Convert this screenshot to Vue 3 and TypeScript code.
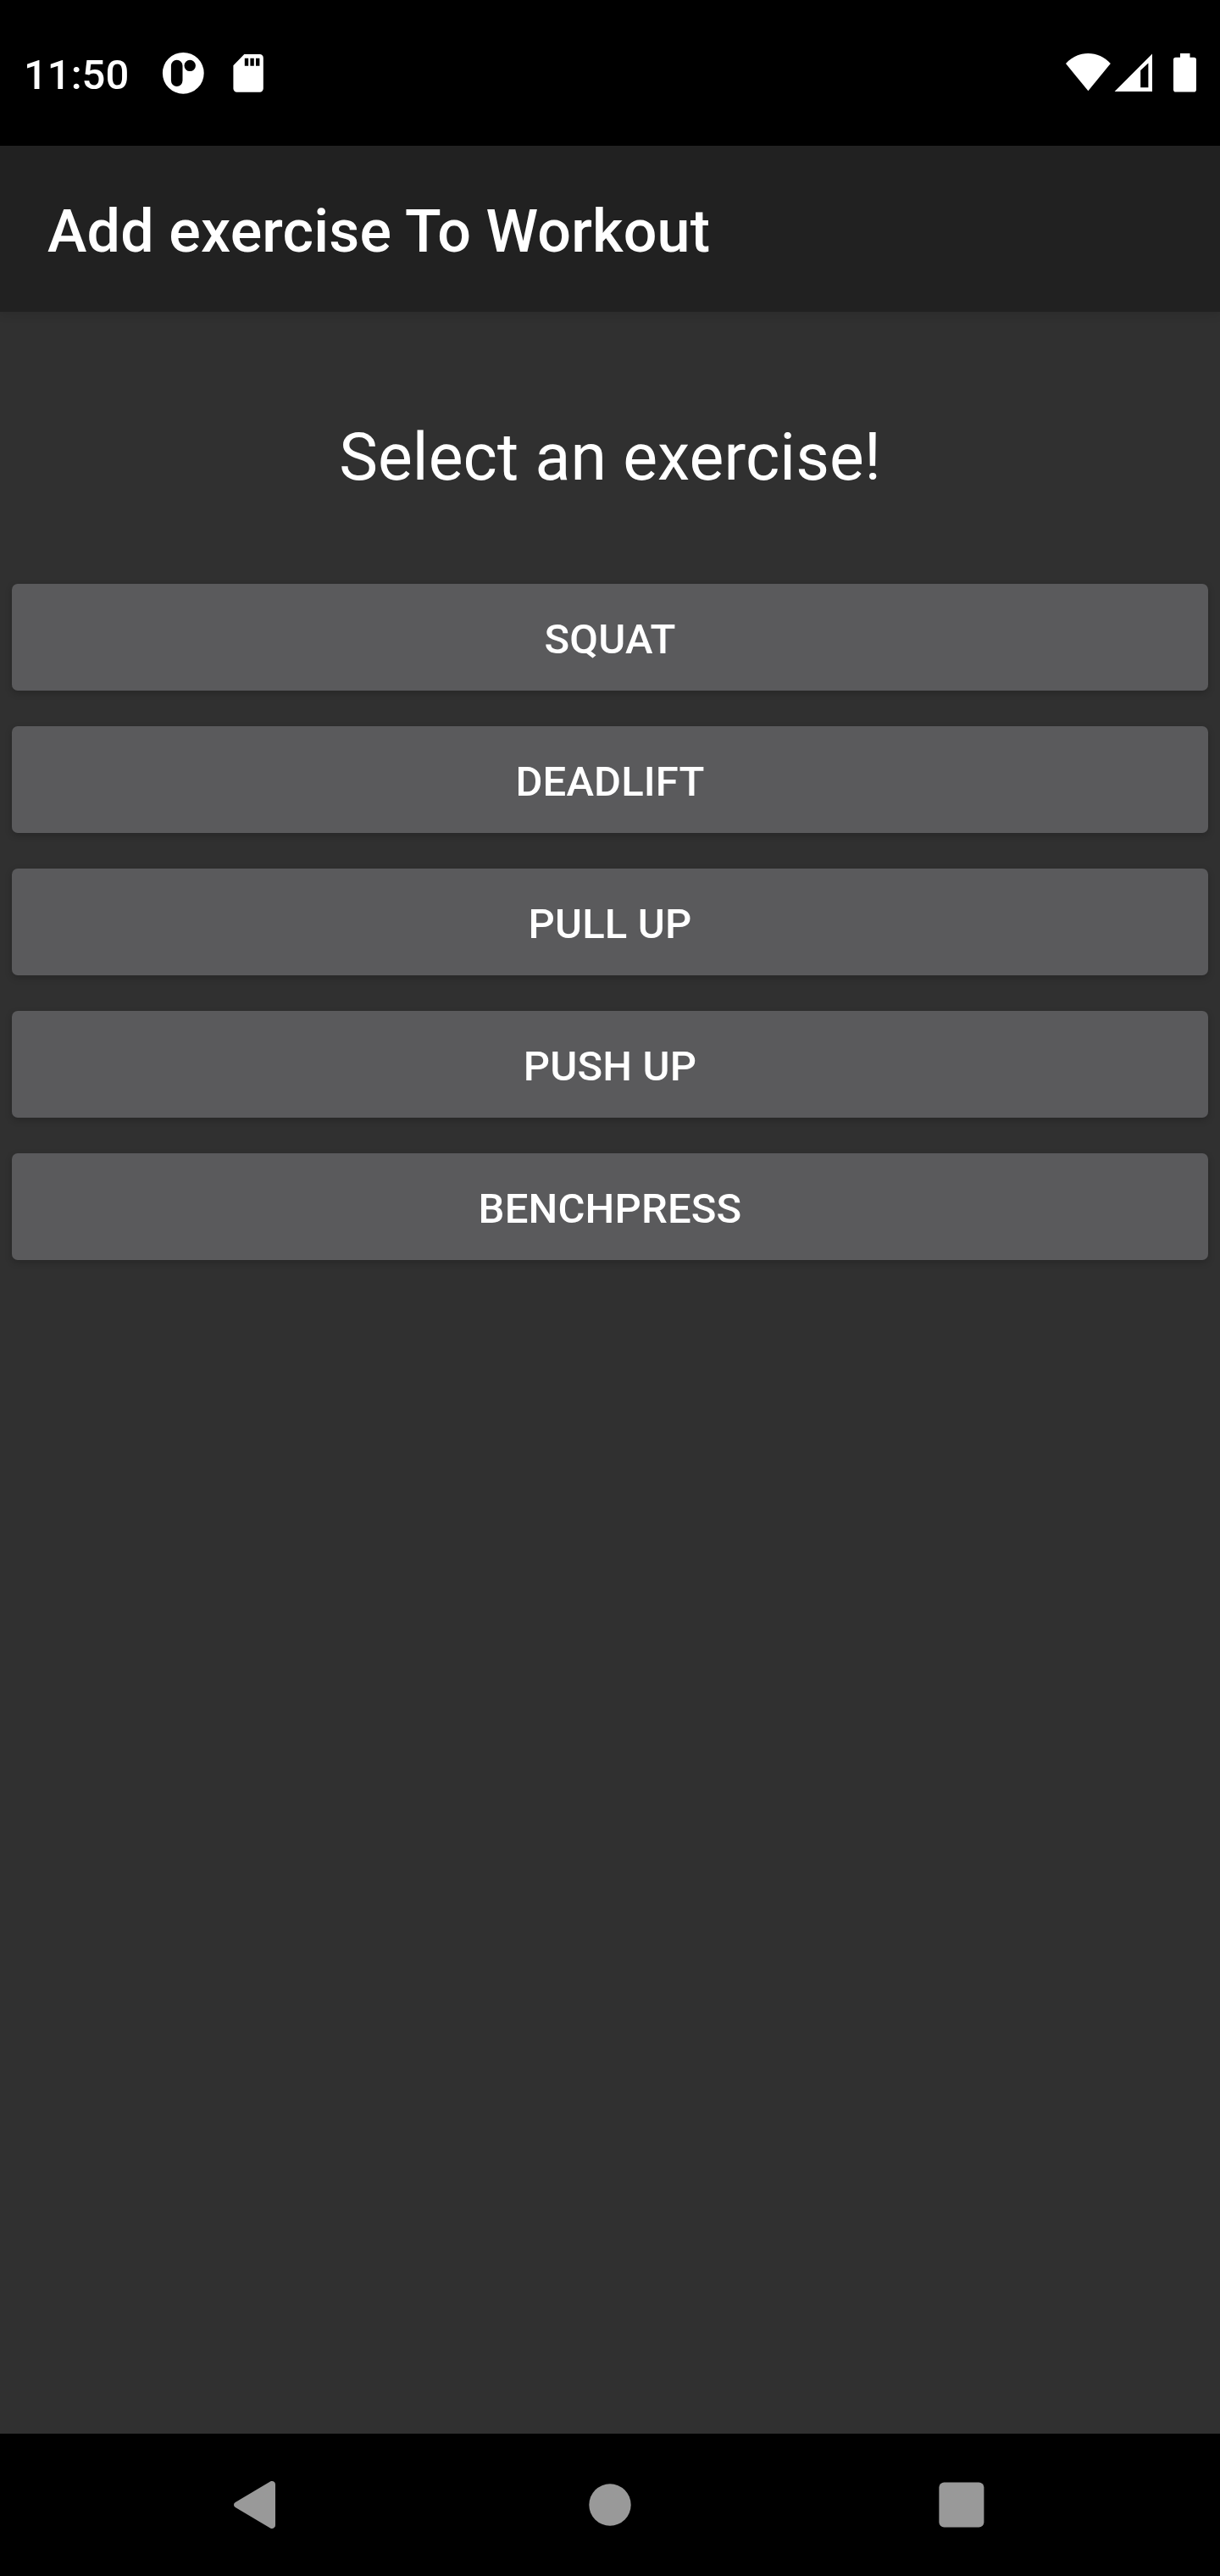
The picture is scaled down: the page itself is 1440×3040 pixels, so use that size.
<script setup lang="ts">
import { ref } from 'vue'

const exercises = ref<string[]>(['Squat', 'Deadlift', 'Pull up', 'Push up', 'Benchpress'])
</script>

<template>
  <div class="screen">
    <header class="status">
      <span class="clock">11:50</span>
      <svg class="app-icon" viewBox="0 0 50 50" width="50" height="50">
        <path
          fill="#fff"
          fill-rule="evenodd"
          d="M25.300 .900a24.400 24.400 0 1 1 0 48.800a24.400 24.400 0 1 1 0-48.800zM17.700 9.700a6.800 6.800 0 0 0-6.800 6.800v17.600a6.800 6.800 0 0 0 13.600 0v-17.600a6.800 6.800 0 0 0-6.800-6.800zM33.200 9.700a6.700 6.700 0 1 0 0 13.400a6.700 6.700 0 1 0 0-13.400z"
        />
      </svg>
      <svg class="card-icon" viewBox="0 0 36 45" width="36" height="45">
        <path
          fill="#fff"
          fill-rule="evenodd"
          d="M13.3 0H31.6a4.2 4.2 0 0 1 4.2 4.2V40.5a4.2 4.2 0 0 1-4.2 4.2H4.6a4.2 4.2 0 0 1-4.2-4.2V13.2zM13.8 4.7v9h4.4v-9zM20.4 4.7v9h4.4v-9zM27 4.7v9h4.4v-9z"
        />
      </svg>
      <span class="spacer"></span>
      <svg class="wifi" viewBox="0 0 53 45" width="53" height="45">
        <path fill="#fff" d="M0 12C7.3 4 16.5 0 26.4 0S45.600 4 52.800 12L26.400 44.300z" />
      </svg>
      <svg class="signal" viewBox="0 0 45 45" width="45" height="45">
        <path fill="#fff" fill-rule="evenodd" d="M44 -.400V44H-.400zM30.200 19V39.300H39.400V10.500z" />
      </svg>
      <svg class="battery" viewBox="0 0 27 46" width="27" height="46">
        <path
          fill="#fff"
          d="M8 0h11.500v4.700h4.700a2.800 2.800 0 0 1 2.800 2.800V42.700a2.800 2.800 0 0 1-2.800 2.800H2.800a2.800 2.800 0 0 1-2.800-2.800V7.500a2.800 2.800 0 0 1 2.800-2.800H8z"
        />
      </svg>
    </header>

    <div class="appbar">
      <h1>Add exercise To Workout</h1>
    </div>

    <main class="content">
      <p class="prompt">Select an exercise!</p>
      <div class="list">
        <button v-for="name in exercises" :key="name" type="button" class="exercise">{{ name }}</button>
      </div>
    </main>

    <nav class="navbar">
      <svg viewBox="0 0 50 56" width="50" height="56">
        <path
          fill="#999"
          d="M1.800 25L43 .600C45.600-.800 49 .800 49 4V52C49 55.200 45.600 56.800 43 55.400L1.800 31C-.600 29.500-.600 26.500 1.800 25z"
        />
      </svg>
      <svg class="home" viewBox="0 0 50 50" width="50" height="50">
        <circle cx="25" cy="25" r="24.700" fill="#999" />
      </svg>
      <svg class="recent" viewBox="0 0 54 54" width="54" height="54">
        <rect x=".400" y=".500" width="53" height="53" rx="6" fill="#999" />
      </svg>
    </nav>
  </div>
</template>

<style>
body {
  margin: 0;
  background: #000;
}
</style>

<style scoped>
.screen {
  display: flex;
  flex-direction: column;
  width: 1440px;
  height: 3040px;
  overflow: hidden;
  background: #303030;
  color: #fff;
  font-family: Roboto, 'Liberation Sans', sans-serif;
}
svg {
  display: block;
  flex: none;
  overflow: visible;
}
.status {
  display: flex;
  align-items: flex-start;
  box-sizing: border-box;
  height: 172px;
  flex: none;
  padding: 61px 28px 0;
  background: #000;
}
.clock {
  width: 163px;
  margin-top: -1px;
  font-size: 49px;
  font-weight: 500;
  line-height: 57px;
}
.app-icon {
  margin: 0 34px 0 0;
}
.card-icon {
  margin-top: 3px;
}
.spacer {
  flex: 1;
}
.wifi {
  margin: 2px 5px 0 0;
}
.signal {
  margin: 3px 24px 0 0;
}
.battery {
  margin-top: 2px;
}
.appbar {
  display: flex;
  align-items: center;
  box-sizing: border-box;
  height: 196px;
  flex: none;
  padding: 6px 56px 0;
  background: #212121;
  box-shadow: 0 2px 12px rgba(0, 0, 0, 0.12);
}
h1 {
  margin: 0;
  font-size: 70px;
  font-weight: 500;
  line-height: 82px;
  letter-spacing: 0.16px;
}
.content {
  flex: 1;
}
.prompt {
  margin: 127px 0 104px;
  font-size: 77px;
  line-height: 90px;
  letter-spacing: 0.08px;
  text-align: center;
}
.list {
  display: flex;
  flex-direction: column;
  gap: 42px;
  padding: 0 14px;
}
.exercise {
  height: 126px;
  border: 0;
  border-radius: 7px;
  padding: 5px 0 0;
  background: #5a5a5c;
  box-shadow: 0 3px 9px rgba(0, 0, 0, 0.2);
  color: #fff;
  font: 500 49px / 57px Roboto, 'Liberation Sans', sans-serif;
  letter-spacing: 0.15px;
  text-transform: uppercase;
}
.navbar {
  display: flex;
  align-items: center;
  box-sizing: border-box;
  height: 168px;
  flex: none;
  padding-left: 276px;
  background: #000;
}
.home {
  margin-left: 369px;
}
.recent {
  margin-left: 363px;
}
</style>
